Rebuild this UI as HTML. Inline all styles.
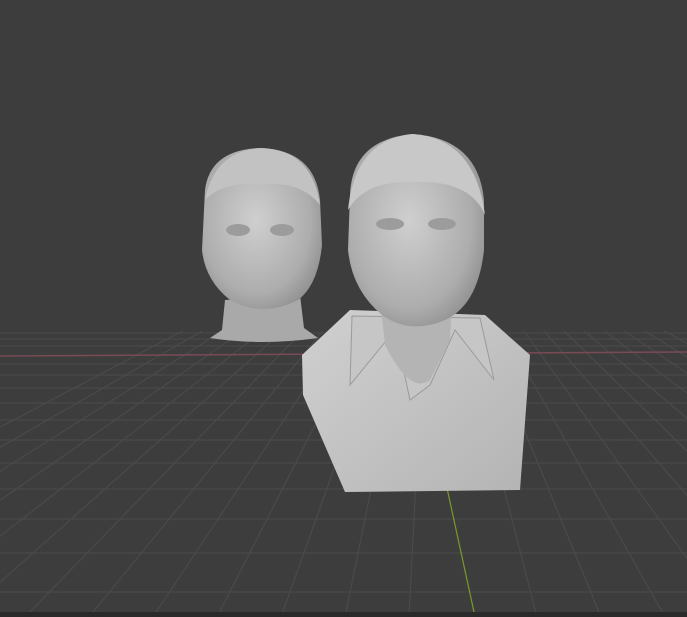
<!DOCTYPE html>
<html><head><style>
html,body{margin:0;padding:0;background:#3d3d3d;width:687px;height:617px;overflow:hidden}
</style></head><body>
<svg width="687" height="617" viewBox="0 0 687 617" xmlns="http://www.w3.org/2000/svg">
<defs>
<radialGradient id="sk" cx="45%" cy="45%" r="65%"><stop offset="0" stop-color="#cfcfcf"/><stop offset="0.7" stop-color="#adadad"/><stop offset="1" stop-color="#8a8a8a"/></radialGradient>
<linearGradient id="tor" x1="0" y1="0" x2="1" y2="1"><stop offset="0" stop-color="#d0d0d0"/><stop offset="1" stop-color="#b4b4b4"/></linearGradient>
</defs>
<rect width="687" height="617" fill="#3d3d3d"/>
<g stroke="#4b4b4b" stroke-width="1.1" fill="none">
<line x1="0" y1="333" x2="687" y2="333"/>
<line x1="0" y1="339" x2="687" y2="339"/>
<line x1="0" y1="346" x2="687" y2="346"/>
<line x1="0" y1="364" x2="687" y2="364"/>
<line x1="0" y1="375" x2="687" y2="375"/>
<line x1="0" y1="388" x2="687" y2="388"/>
<line x1="0" y1="403" x2="687" y2="403"/>
<line x1="0" y1="420" x2="687" y2="420"/>
<line x1="0" y1="440" x2="687" y2="440"/>
<line x1="0" y1="463" x2="687" y2="463"/>
<line x1="0" y1="489" x2="687" y2="489"/>
<line x1="0" y1="519" x2="687" y2="519"/>
<line x1="0" y1="553" x2="687" y2="553"/>
<line x1="0" y1="592" x2="687" y2="592"/>
<line x1="430" y1="200" x2="-295" y2="617"/>
<line x1="430" y1="200" x2="-231" y2="617"/>
<line x1="430" y1="200" x2="-167" y2="617"/>
<line x1="430" y1="200" x2="-103" y2="617"/>
<line x1="430" y1="200" x2="-39" y2="617"/>
<line x1="430" y1="200" x2="25" y2="617"/>
<line x1="430" y1="200" x2="89" y2="617"/>
<line x1="430" y1="200" x2="153" y2="617"/>
<line x1="430" y1="200" x2="217" y2="617"/>
<line x1="430" y1="200" x2="281" y2="617"/>
<line x1="430" y1="200" x2="345" y2="617"/>
<line x1="430" y1="200" x2="409" y2="617"/>
<line x1="430" y1="200" x2="537" y2="617"/>
<line x1="430" y1="200" x2="601" y2="617"/>
<line x1="430" y1="200" x2="665" y2="617"/>
<line x1="430" y1="200" x2="729" y2="617"/>
<line x1="430" y1="200" x2="793" y2="617"/>
<line x1="430" y1="200" x2="857" y2="617"/>
<line x1="430" y1="200" x2="921" y2="617"/>
<line x1="430" y1="200" x2="985" y2="617"/>
<line x1="430" y1="200" x2="1049" y2="617"/>
<line x1="430" y1="200" x2="1113" y2="617"/>
<line x1="430" y1="200" x2="1177" y2="617"/>
<line x1="430" y1="200" x2="-359" y2="617"/>
</g>
<rect x="0" y="200" width="687" height="131" fill="#3d3d3d"/>
<line x1="0" y1="356" x2="687" y2="352" stroke="#7a4a55" stroke-width="1.5"/>
<line x1="418" y1="355" x2="474" y2="612" stroke="#7a9a2a" stroke-width="1.2"/>
<rect x="0" y="612" width="687" height="5" fill="#2a2a2a"/>
<!-- left head -->
<path d="M225 300 L222 330 L210 338 Q260 346 318 338 L304 328 L300 295 Z" fill="#a9a9a9"/>
<path d="M205 190 Q210 150 260 148 Q315 150 320 200 L322 245 Q318 285 298 300 Q262 318 230 300 Q205 280 202 250 Z" fill="url(#sk)"/>
<path d="M205 200 Q215 150 262 148 Q312 150 320 205 Q300 180 262 185 Q225 180 205 200 Z" fill="#c2c2c2"/>
<ellipse cx="238" cy="230" rx="12" ry="6" fill="#9c9c9c"/><ellipse cx="282" cy="230" rx="12" ry="6" fill="#9c9c9c"/>
<!-- right bust -->
<path d="M350 310 L302 355 L303 395 L345 492 L520 490 L530 355 L485 315 Z" fill="url(#tor)"/>
<path d="M352 316 L350 385 L395 330 L410 400 L430 385 L455 330 L494 380 L480 318 Z" fill="#c6c6c6" stroke="#9a9a9a" stroke-width="1"/>
<path d="M380 300 L385 345 Q410 395 430 380 L450 340 L452 300 Z" fill="#b4b4b4"/>
<path d="M350 195 Q352 140 412 134 Q478 138 484 200 L484 250 Q478 305 445 320 Q410 335 382 315 Q352 290 348 250 Z" fill="url(#sk)"/>
<path d="M348 210 Q355 140 412 134 Q475 138 485 215 Q470 180 415 182 Q365 180 348 210 Z" fill="#c8c8c8"/>
<ellipse cx="390" cy="224" rx="14" ry="6" fill="#9c9c9c"/><ellipse cx="442" cy="224" rx="14" ry="6" fill="#9c9c9c"/>
</svg>
</body></html>
